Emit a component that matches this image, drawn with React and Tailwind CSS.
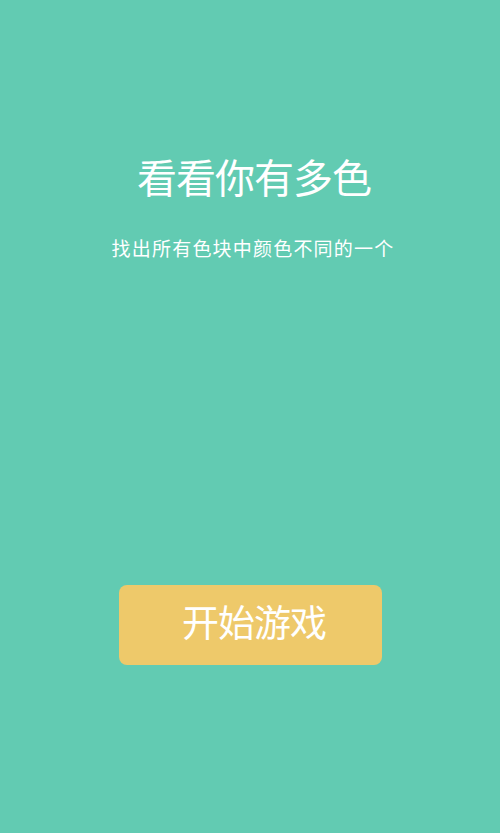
export default function App() {
  return (
    <div
      className="min-h-[833px] w-full bg-[#62cbb2] flex flex-col items-center text-white"
      style={{ fontFamily: "'Noto Sans CJK SC', 'Noto Sans', sans-serif" }}
    >
      <h1 className="mt-[152px] pl-[8px] text-[40px] leading-[48px] font-normal tracking-[-1px]">看看你有多色</h1>
      <p className="mt-[35px] pl-[6px] text-[19px] leading-[26px] tracking-[1.2px]">找出所有色块中颜色不同的一个</p>
      <button className="mt-[324px] w-[263px] h-[80px] pb-[6px] pl-[8px] rounded-[8px] bg-[#eec96a] text-white text-[37px] tracking-[-1px] flex items-center justify-center">
        开始游戏
      </button>
    </div>
  );
}
